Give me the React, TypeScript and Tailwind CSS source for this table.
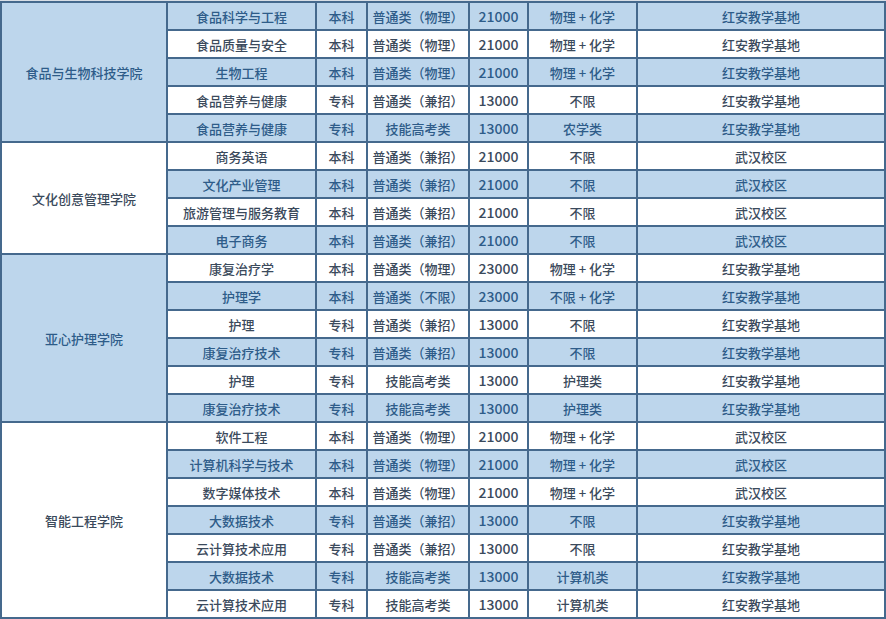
type Row = [string, string, string, string, string, string];

const groups: { college: string; rows: Row[] }[] = [
  {
    college: '食品与生物科技学院',
    rows: [
      ['食品科学与工程', '本科', '普通类（物理）', '21000', '物理 + 化学', '红安教学基地'],
      ['食品质量与安全', '本科', '普通类（物理）', '21000', '物理 + 化学', '红安教学基地'],
      ['生物工程', '本科', '普通类（物理）', '21000', '物理 + 化学', '红安教学基地'],
      ['食品营养与健康', '专科', '普通类（兼招）', '13000', '不限', '红安教学基地'],
      ['食品营养与健康', '专科', '技能高考类', '13000', '农学类', '红安教学基地'],
    ],
  },
  {
    college: '文化创意管理学院',
    rows: [
      ['商务英语', '本科', '普通类（兼招）', '21000', '不限', '武汉校区'],
      ['文化产业管理', '本科', '普通类（兼招）', '21000', '不限', '武汉校区'],
      ['旅游管理与服务教育', '本科', '普通类（兼招）', '21000', '不限', '武汉校区'],
      ['电子商务', '本科', '普通类（兼招）', '21000', '不限', '武汉校区'],
    ],
  },
  {
    college: '亚心护理学院',
    rows: [
      ['康复治疗学', '本科', '普通类（物理）', '23000', '物理 + 化学', '红安教学基地'],
      ['护理学', '本科', '普通类（不限）', '23000', '不限 + 化学', '红安教学基地'],
      ['护理', '专科', '普通类（兼招）', '13000', '不限', '红安教学基地'],
      ['康复治疗技术', '专科', '普通类（兼招）', '13000', '不限', '红安教学基地'],
      ['护理', '专科', '技能高考类', '13000', '护理类', '红安教学基地'],
      ['康复治疗技术', '专科', '技能高考类', '13000', '护理类', '红安教学基地'],
    ],
  },
  {
    college: '智能工程学院',
    rows: [
      ['软件工程', '本科', '普通类（物理）', '21000', '物理 + 化学', '武汉校区'],
      ['计算机科学与技术', '本科', '普通类（物理）', '21000', '物理 + 化学', '武汉校区'],
      ['数字媒体技术', '本科', '普通类（物理）', '21000', '物理 + 化学', '武汉校区'],
      ['大数据技术', '专科', '普通类（兼招）', '13000', '不限', '红安教学基地'],
      ['云计算技术应用', '专科', '普通类（兼招）', '13000', '不限', '红安教学基地'],
      ['大数据技术', '专科', '技能高考类', '13000', '计算机类', '红安教学基地'],
      ['云计算技术应用', '专科', '技能高考类', '13000', '计算机类', '红安教学基地'],
    ],
  },
];

const cell = 'border-2 border-[#45698d] text-center align-middle p-0 whitespace-nowrap';

export default function App() {
  let idx = 0;
  return (
    <div
      className="w-[886px] h-[619px] overflow-hidden bg-[#d9dfe6] pt-px"
      style={{ fontFamily: '"Noto Sans CJK SC", "Noto Sans", sans-serif' }}
    >
      <table className="table-fixed border-collapse w-[884px] text-[13px] font-medium leading-none">
        <colgroup>
          <col className="w-[166px]" />
          <col className="w-[149px]" />
          <col className="w-[51px]" />
          <col className="w-[102px]" />
          <col className="w-[59px]" />
          <col className="w-[109px]" />
          <col className="w-[248px]" />
        </colgroup>
        <tbody>
          {groups.map((g, gi) =>
            g.rows.map((r, ri) => {
              const blue = idx++ % 2 === 0;
              const rowCls = blue ? 'bg-[#bdd6ec] text-[#2e5c89]' : 'bg-white text-[#3b4a5c]';
              const collegeCls = gi % 2 === 0 ? 'bg-[#bdd6ec] text-[#2e5c89]' : 'bg-white text-[#3b4a5c]';
              return (
                <tr key={`${gi}-${ri}`} className="h-[28px]">
                  {ri === 0 && (
                    <td rowSpan={g.rows.length} className={`${cell} ${collegeCls}`}>
                      {g.college}
                    </td>
                  )}
                  {r.map((v, ci) => (
                    <td key={ci} className={`${cell} ${rowCls} ${ci === 3 ? 'text-[14px]' : ''}`}>
                      {v}
                    </td>
                  ))}
                </tr>
              );
            })
          )}
        </tbody>
      </table>
    </div>
  );
}
